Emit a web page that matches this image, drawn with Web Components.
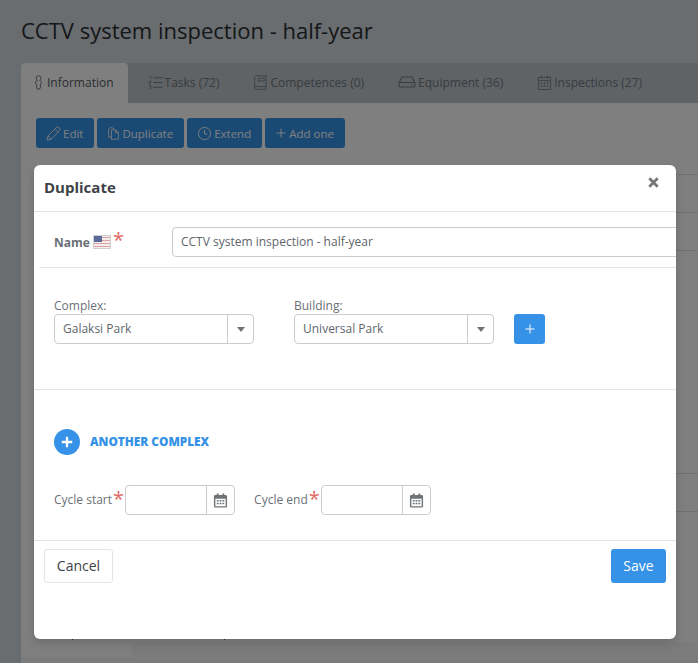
<!DOCTYPE html>
<html>
<head>
<meta charset="utf-8">
<title>Duplicate</title>
<style>
  html, body { margin: 0; height: 100%; }
  body { background: #d3dae0; font-family: "Open Sans", sans-serif; color: #3d4247; overflow: hidden; }
</style>
</head>
<body>
<app-page>
  <modal-dialog heading="Duplicate"></modal-dialog>
</app-page>

<script>
const ICONS = {
  info: '<path d="M8 .8a2.600 2.600 0 0 1 2.600 2.600c0 1.100-.6 1.900-1.400 2.300 1 .3 1.700 1 1.700 2v1.800l-.9.8v3.200c0 .9-.6 1.500-1.500 1.500h-1c-.9 0-1.500-.6-1.500-1.500v-3.200l-.9-.8V7.700c0-1 .7-1.700 1.700-2-.8-.4-1.400-1.200-1.400-2.300A2.600 2.600 0 0 1 8 .8z" stroke="currentColor" fill="none" stroke-width=".9"/>',
  tasks: '<path d="M5.500 3h10M5.500 8h10M5.500 13h10" stroke="currentColor" fill="none"/><path d="M1.500 1.200h1.500v3.200M1.200 6.500h2v1.500h-2v1.700h2M1.200 11.300h2v1.400h-1.500M3.200 12.700v1.800h-2" stroke="currentColor" fill="none" stroke-width=".7"/>',
  book: '<path d="M3.500.8h10.500v11.500H3.500c-1 0-1.800.6-1.800 1.400s.8 1.500 1.800 1.500H14v-3M1.700 13.700V2.600C1.700 1.600 2.500.8 3.500.8M5.500 3.500h6.500v3H5.500z" stroke="currentColor" fill="none" stroke-width=".9"/>',
  drive: '<path d="M1 8.500l2.600-5h8.800l2.600 5v3a1 1 0 0 1-1 1H2a1 1 0 0 1-1-1zM1 8.500h14M12 10.500h1.200" stroke="currentColor" fill="none" stroke-width=".9"/>',
  calendar: '<path d="M1.500 2.500h13v13h-13zM1.500 6h13M4.500 .8v3M11.500 .8v3" stroke="currentColor" fill="none" stroke-width=".9"/><path d="M4 8h1.500v1.500H4zM7.200 8h1.500v1.500H7.200zM10.500 8H12v1.500h-1.500zM4 11h1.500v1.500H4zM7.200 11h1.500v1.500H7.200zM10.500 11H12v1.500h-1.500z" fill="currentColor"/>',
  calendarSolid: '<path d="M4 .5h2v2.500H4zM10 .5h2v2.500h-2z" fill="currentColor"/><path d="M2.500 2h11A1.500 1.500 0 0 1 15 3.500v10.500a1.500 1.500 0 0 1-1.500 1.500h-11A1.500 1.500 0 0 1 1 14V3.500A1.500 1.500 0 0 1 2.500 2zM2.500 6v8h11V6z" fill="currentColor" fill-rule="evenodd"/><path d="M4 7.500h2v1.500H4zM7 7.500h2v1.500H7zM10 7.500h2v1.500h-2zM4 10.500h2V12H4zM7 10.500h2V12H7zM10 10.500h2V12h-2z" fill="currentColor"/>',
  pencil: '<path d="M1.200 15l1-4.500L10.800 1.900a1.900 1.900 0 0 1 3.300 3.300L5.600 14zM2.200 10.500l3.400 3.500M9.500 3.300l3.300 3.300" stroke="currentColor" fill="none" stroke-width=".9"/>',
  copy: '<path d="M5.500 3.500h5l3.500 3.500v8H5.500zM10.500 3.500V7H14M5.500 12.500H2V2.500L3.500 1H7l2 2.500" stroke="currentColor" fill="none" stroke-width="1"/>',
  clock: '<circle cx="8" cy="8" r="6.500" stroke="currentColor" fill="none"/><path d="M8 4v4.500h3" stroke="currentColor" fill="none"/>',
  plus: '<path d="M8 2v12M2 8h12" stroke="currentColor" fill="none" stroke-width="1.300"/>',
  plusBold: '<path d="M8 2v12M2 8h12" stroke="currentColor" fill="none" stroke-width="2.600"/>'
};

function icon(name, size) {
  return `<svg width="${size}" height="${size}" viewBox="0 0 16 16" aria-hidden="true">${ICONS[name]}</svg>`;
}

class TabItem extends HTMLElement {
  constructor() {
    super();
    const active = this.hasAttribute('active');
    const size = this.getAttribute('size') || 15;
    this.attachShadow({ mode: 'open' }).innerHTML = `
      <style>
        :host { display: flex; align-items: center; gap: ${active ? '1px' : '2px'}; height: 40px; box-sizing: border-box; padding: 0 ${active ? '14px 2px 10px' : '0 2px 0'}; font-size: 12px;
          border-radius: 4px 4px 0 0; color: ${active ? '#565b61' : '#717a81'}; background: ${active ? '#fff' : 'transparent'}; }
        svg { display: block; flex: none; }
      </style>
      ${icon(this.getAttribute('icon'), size)}<slot></slot>`;
  }
}
customElements.define('tab-item', TabItem);

class ActionButton extends HTMLElement {
  constructor() {
    super();
    const size = this.getAttribute('size') || 15;
    this.attachShadow({ mode: 'open' }).innerHTML = `
      <style>
        :host { display: flex; align-items: center; gap: 2px; height: 30px; padding: 0 11px 0 10px; box-sizing: border-box;
          background: #3592e6; color: #fff; font-size: 11.500px; border-radius: 3px; }
        svg { display: block; flex: none; }
      </style>
      ${icon(this.getAttribute('icon'), size)}<slot></slot>`;
  }
}
customElements.define('action-button', ActionButton);

class SelectBox extends HTMLElement {
  constructor() {
    super();
    this.attachShadow({ mode: 'open' }).innerHTML = `
      <style>
        :host { display: block; width: 200px; }
        label { display: block; font-size: 12px; line-height: 17px; color: #6b7076; }
        .box { display: flex; height: 30px; box-sizing: border-box; border: 1px solid #ccc; border-radius: 4px; font-size: 12px; color: #60656b; }
        .value { flex: 1; padding-left: 8px; line-height: 28px; }
        .caret { width: 25px; border-left: 1px solid #ccc; display: flex; align-items: center; justify-content: center; }
        .caret i { border: 4px solid transparent; border-top: 5px solid #6e7378; border-bottom: 0; }
      </style>
      <label>${this.getAttribute('label')}</label>
      <div class="box"><span class="value"><slot></slot></span><span class="caret"><i></i></span></div>`;
  }
}
customElements.define('select-box', SelectBox);

class DateField extends HTMLElement {
  constructor() {
    super();
    this.attachShadow({ mode: 'open' }).innerHTML = `
      <style>
        :host { display: flex; align-items: center; font-size: 12px; color: #6b7076; }
        .label { margin-top: -2px; }
        .star { color: #e06a66; font-size: 20px; line-height: 20px; height: 20px; margin: -3px 1px 0 1px; }
        .box { display: flex; width: 110px; height: 30px; box-sizing: border-box; border: 1px solid #ccc; border-radius: 4px; }
        .input { flex: 1; }
        .btn { width: 27px; border-left: 1px solid #ccc; display: flex; align-items: center; justify-content: center; color: #6e7378; }
      </style>
      <span class="label"><slot></slot></span><span class="star">*</span>
      <div class="box"><span class="input"></span><span class="btn">${icon('calendarSolid', 15)}</span></div>`;
  }
}
customElements.define('date-field', DateField);

class ModalDialog extends HTMLElement {
  constructor() {
    super();
    this.attachShadow({ mode: 'open' }).innerHTML = `
      <style>
        :host { position: absolute; left: 34px; top: 165px; width: 642px; height: 474px; background: #fff; border-radius: 6px;
          box-shadow: 0 4px 10px rgba(0,0,0,.15); overflow: hidden; display: flex; flex-direction: column; color: #60656b; }
        header { height: 47px; flex: none; box-sizing: border-box; border-bottom: 1px solid #e5e5e5; display: flex; align-items: flex-start; justify-content: space-between; padding: 11px 17px 0 10px; }
        h2 { margin: 0; font-size: 15px; line-height: 22px; font-weight: 700; color: #3d4247; }
        .close { display: block; color: #777; margin-top: 1px; }
        .name-row { height: 56px; flex: none; box-sizing: border-box; margin-left: 5px; border-bottom: 1px solid #e5e5e5; display: flex; align-items: flex-start; padding: 15px 0 0 15px; }
        .name-label { width: 118px; flex: none; display: flex; align-items: center; height: 30px; font-size: 12px; font-weight: 700; color: #6b7076; gap: 3px; }
        .name-label svg { display: block; }
        .name-label .star { color: #e06a66; font-size: 20px; line-height: 20px; height: 20px; margin: -5px 0 0 -1px; font-weight: 400; }
        .name-input { width: 520px; flex: none; height: 30px; box-sizing: border-box; border: 1px solid #ccc; border-radius: 4px; padding-left: 8px; line-height: 28px; font-size: 12px; }
        .location { height: 122px; flex: none; box-sizing: border-box; border-bottom: 1px solid #e5e5e5; display: flex; align-items: flex-end; gap: 40px; padding: 0 0 45px 20px; }
        .add { width: 31px; height: 30px; background: #3592e6; color: #fff; border-radius: 3px; display: flex; align-items: center; justify-content: center; margin-left: -20px; }
        .another { display: flex; align-items: center; gap: 10px; margin: 39px 0 0 20px; height: 26px; font-size: 11.800px; font-weight: 700; color: #3592e6; }
        .another b { margin-top: -2px; }
        .circle { width: 26px; height: 26px; border-radius: 50%; background: #3592e6; color: #fff; display: flex; align-items: center; justify-content: center; }
        .dates { display: flex; gap: 19px; margin: 30px 0 0 20px; }
        footer { margin-top: auto; height: 99px; flex: none; box-sizing: border-box; border-top: 1px solid #e0e6ea; display: flex; justify-content: space-between; align-items: flex-start; padding: 8px 10px 0; }
        .cancel, .save { height: 34px; box-sizing: border-box; padding-bottom: 2px; font-size: 14px; border-radius: 3px; display: flex; align-items: center; justify-content: center; }
        .cancel { width: 69px; border: 1px solid #e5e5e5; color: #3d4247; }
        .save { width: 55px; background: #3592e6; color: #fff; }
      </style>
      <header><h2>${this.getAttribute('heading')}</h2>
        <svg class="close" width="11" height="11" viewBox="0 0 11 11" aria-label="Close"><path d="M1.300 1.300l8.400 8.400M9.700 1.300l-8.400 8.400" stroke="currentColor" stroke-width="2.800"/></svg>
      </header>
      <div class="name-row">
        <div class="name-label">Name <svg width="18" height="14" viewBox="0 0 18 14">
          <rect x=".5" y=".5" width="17" height="13" fill="#f3eeee" stroke="#cfcfcf"/>
          <path d="M1 2.500h16M1 5.500h16M1 8.500h16M1 11.500h16" stroke="#e0a0a4" stroke-width="1.200"/>
          <rect x="1" y="1" width="8" height="6" fill="#5b6a9a"/></svg><span class="star">*</span></div>
        <div class="name-input">CCTV system inspection - half-year</div>
      </div>
      <div class="location">
        <select-box label="Complex:">Galaksi Park</select-box>
        <select-box label="Building:">Universal Park</select-box>
        <div class="add">${icon('plus', 12)}</div>
      </div>
      <div class="another"><span class="circle">${icon('plusBold', 14)}</span><b>ANOTHER COMPLEX</b></div>
      <div class="dates">
        <date-field>Cycle start</date-field>
        <date-field>Cycle end</date-field>
      </div>
      <footer><div class="cancel">Cancel</div><div class="save">Save</div></footer>`;
  }
}
customElements.define('modal-dialog', ModalDialog);

class AppPage extends HTMLElement {
  constructor() {
    super();
    this.attachShadow({ mode: 'open' }).innerHTML = `
      <style>
        :host { display: block; height: 663px; position: relative; overflow: hidden; }
        h1 { margin: 0; font-weight: 400; font-size: 22px; line-height: 30px; padding: 15px 0 18px 21px; color: #2b2f33; }
        .main { margin-left: 21px; background: #fff; height: 600px; }
        .tabs { display: flex; height: 40px; background: #bec6cc; gap: 34px; }
        .tabs tab-item:first-child { margin-right: -14px; }
        .actions { display: flex; gap: 3px; padding: 15px 15px 26px; }
        .rows { margin-left: 15px; }
        .rows div { height: 38px; box-sizing: border-box; border-top: 1px solid #dee2e6; }
        .rows div.tall { height: 223px; }
        .rows div.last { height: 132px; display: flex; align-items: flex-end; gap: 151px; padding: 0 0 3px 36px; }
        .rows div.last i { display: block; width: 1px; height: 3px; background: #666; }
        .foot { height: 20px; background: #f6f6f6; }
        .foot i { display: block; width: 111px; height: 14px; background: #fff; }
        .dim { position: absolute; inset: 0; background: rgba(0,0,0,.5); }
      </style>
      <h1>CCTV system inspection - half-year</h1>
      <div class="main">
        <div class="tabs">
          <tab-item icon="info" active>Information</tab-item>
          <tab-item icon="tasks">Tasks (72)</tab-item>
          <tab-item icon="book">Competences (0)</tab-item>
          <tab-item icon="drive" size="18">Equipment (36)</tab-item>
          <tab-item icon="calendar">Inspections (27)</tab-item>
        </div>
        <div class="actions">
          <action-button icon="pencil">Edit</action-button>
          <action-button icon="copy" size="13">Duplicate</action-button>
          <action-button icon="clock">Extend</action-button>
          <action-button icon="plus" size="12">Add one</action-button>
        </div>
        <div class="rows"><div></div><div></div><div class="tall"></div><div></div><div class="last"><i></i><i></i></div></div>
        <div class="foot"><i></i></div>
      </div>
      <div class="dim"></div>
      <slot></slot>`;
  }
}
customElements.define('app-page', AppPage);
</script>
</body>
</html>
